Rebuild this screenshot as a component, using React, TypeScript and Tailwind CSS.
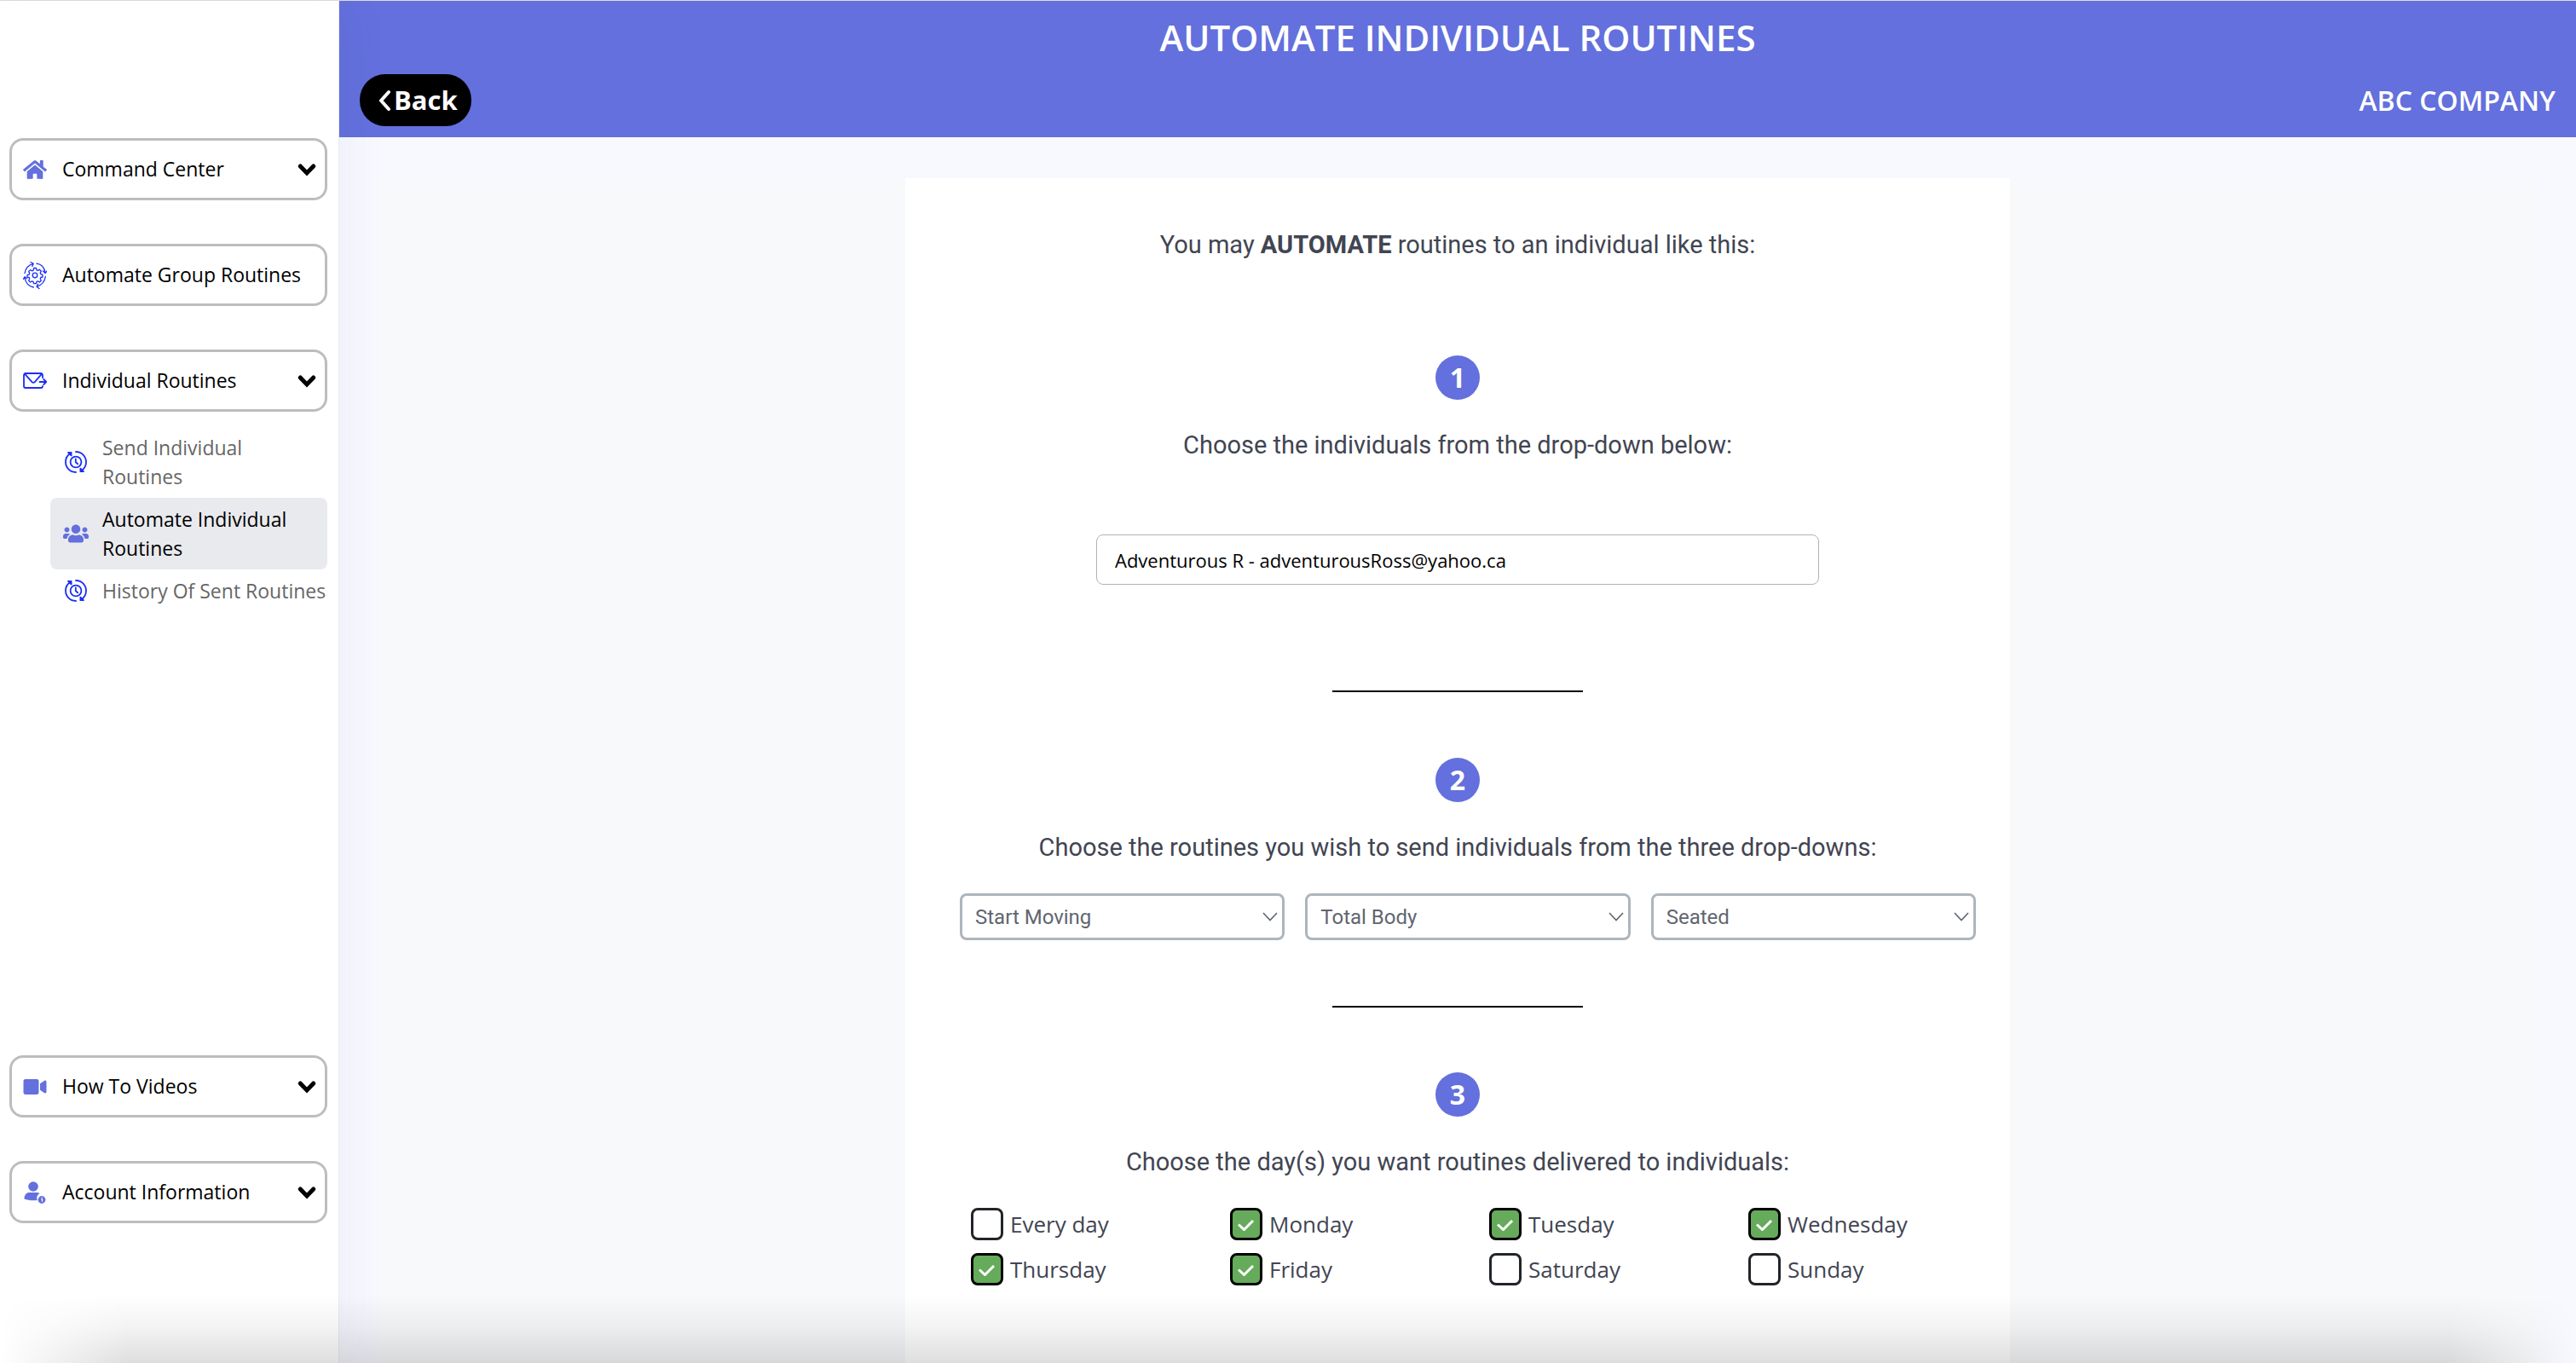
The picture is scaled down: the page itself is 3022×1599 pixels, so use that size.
import { useState } from 'react';
import type { ReactNode } from 'react';
import { FaHome, FaUsers, FaVideo } from 'react-icons/fa';

const GroupCycleIcon = () => (
  <svg viewBox="0 0 28 34" className="w-7 h-[34px]" fill="none" stroke="#1a2ff5" strokeWidth="1.3" strokeLinecap="round" strokeLinejoin="round">
    <circle cx="14" cy="17" r="2.8" />
    <path d="M12.6 8.5h2.8l.5 2.2 1.5.7 2-1.2 2 2-1.2 2 .6 1.5 2.2.5v2.8l-2.2.5-.6 1.5 1.2 2-2 2-2-1.2-1.5.7-.5 2.2h-2.8l-.5-2.2-1.5-.7-2 1.2-2-2 1.2-2-.6-1.5L5 19.4v-2.8l2.2-.5.6-1.5-1.2-2 2-2 2 1.2 1.5-.7z" />
    <path d="M2 14.500C2.800 9.500 6.500 5 12 3.400M9 1.500l3.200 1.800-1.400 3.200" />
    <path d="M16 3.200c5.500.8 9.200 5 10 11M23.500 12l2.600 2.600L28 12" />
    <path d="M26.300 18.500c-.8 5.500-4.500 10-10 11.700M19 32.500l-3-2.200 1.500-3" />
    <path d="M12.300 31C7 30 3 25.500 1.900 19.500M.5 21.500l1.400-2.800 2.600 2" />
  </svg>
);

const MailIcon = () => (
  <svg viewBox="0 0 28 20" className="w-7 h-5" fill="none" stroke="#1a2ff5" strokeWidth="1.8" strokeLinecap="round" strokeLinejoin="round">
    <path d="M23 6V3a2 2 0 0 0-2-2H3a2 2 0 0 0-2 2v13a2 2 0 0 0 2 2h18a2 2 0 0 0 2-2" />
    <path d="M2 1.600l8.500 9.500a2.300 2.300 0 0 0 3.300 0L22 1.600" />
    <path d="M19.500 11H27M24.300 8l3 3-3 3" />
  </svg>
);

const ClockCycleIcon = () => (
  <svg viewBox="0 0 26 26" className="w-[26px] h-[26px]" fill="none" stroke="#1a2ff5" strokeWidth="1.8" strokeLinecap="round" strokeLinejoin="round">
    <circle cx="13" cy="13" r="6.400" />
    <path d="M12.800 9.500v3.800l2.400 2" />
    <path d="M13 25C6 25 1 19.500 1 13c0-4.200 2-8 5.500-10" />
    <path d="M4 1.800h3.600v3.600z" fill="#1a2ff5" />
    <path d="M13 1c7 0 12 5.500 12 12 0 4.200-2 8-5.500 10" />
    <path d="M22 24.200h-3.600v-3.600z" fill="#1a2ff5" />
  </svg>
);

const AccountIcon = () => (
  <svg viewBox="0 0 26 26" className="w-[26px] h-[26px]" fill="#6370dd">
    <circle cx="11" cy="6" r="5.800" />
    <path d="M.5 20.500c0-5 2.500-7.500 6-7.500h9c1.200 0 2.200.3 3 .9-2 1.300-3.300 3.300-3.300 5.600 0 1.100.2 1.700.6 2.600C10 22.800 4 22 .5 20.500z" />
    <circle cx="21" cy="21.500" r="4.400" />
    <path d="M20.200 20.500h1.300v3.300M21.300 18.300v.6" stroke="white" strokeWidth="1.200" fill="none" />
  </svg>
);

const Chevron = () => (
  <svg viewBox="0 0 22 16" className="w-[22px] h-4" fill="none" stroke="black" strokeWidth="5" strokeLinecap="round">
    <path d="M3.300 4l7.700 8 7.700-8" />
  </svg>
);

type MenuButtonProps = {
  icon: ReactNode;
  label: string;
  expandable?: boolean;
};

const MenuButton = ({ icon, label, expandable = true }: MenuButtonProps) => (
  <button
    type="button"
    className="flex items-center w-full h-[73px] pl-[11px] pr-2.5 bg-white border-3 border-[#c0bcbc] rounded-2xl text-[23px] text-black text-left whitespace-nowrap"
  >
    <span className="flex justify-center w-8 mr-4 shrink-0">{icon}</span>
    <span className="flex-1">{label}</span>
    {expandable && <Chevron />}
  </button>
);

const subItems = [
  { label: 'Send Individual Routines', icon: <ClockCycleIcon /> },
  { label: 'Automate Individual Routines', icon: <FaUsers className="w-[30px] h-6 text-[#6370dd]" />, active: true },
  { label: 'History Of Sent Routines', icon: <ClockCycleIcon /> },
];

const Sidebar = () => (
  <aside className="relative z-10 flex flex-col w-[397px] shrink-0 pt-[161px] pb-[164px] pl-[11px] pr-[13px] bg-white shadow-[0_0_60px_rgba(60,70,110,0.07)]">
    <nav className="flex flex-col gap-[51px]">
      <MenuButton icon={<FaHome className="size-7 text-[#6370dd]" />} label="Command Center" />
      <MenuButton icon={<GroupCycleIcon />} label="Automate Group Routines" expandable={false} />
      <div>
        <MenuButton icon={<MailIcon />} label="Individual Routines" />
        <ul className="mt-[17px] ml-12">
          {subItems.map((item) => (
            <li key={item.label}>
              <a
                href="#"
                className={`flex items-center py-2 pl-3.5 pr-px rounded-lg text-[23px] leading-[34px] ${
                  item.active ? 'bg-[#e9eaee] text-black' : 'text-[#666666]'
                }`}
              >
                <span className="flex justify-center w-8 mr-[15px] shrink-0">{item.icon}</span>
                <span>{item.label}</span>
              </a>
            </li>
          ))}
        </ul>
      </div>
    </nav>
    <nav className="flex flex-col gap-[51px] mt-auto">
      <MenuButton icon={<FaVideo className="w-7 h-6 text-[#6370dd]" />} label="How To Videos" />
      <MenuButton icon={<AccountIcon />} label="Account Information" />
    </nav>
  </aside>
);

const StepNumber = ({ value }: { value: number }) => (
  <div className="flex items-center justify-center size-[52px] rounded-full bg-[#6370dd] text-white text-[32px] leading-none font-bold">
    {value}
  </div>
);

const StepText = ({ children }: { children: ReactNode }) => (
  <p className="font-['Roboto',sans-serif] text-[29px] leading-9 text-[#414552] text-center">{children}</p>
);

const Divider = () => <hr className="w-[294px] border-t-2 border-black" />;

const dropdowns = [
  { label: 'Routine type', options: ['Start Moving', 'Keep Moving'] },
  { label: 'Body area', options: ['Total Body', 'Upper Body', 'Lower Body'] },
  { label: 'Position', options: ['Seated', 'Standing'] },
];

const SelectBox = ({ label, options }: { label: string; options: string[] }) => (
  <div className="relative flex-1">
    <select
      aria-label={label}
      className="appearance-none block w-full h-[55px] px-[15px] bg-white border-3 border-[#adb5bd] rounded-lg font-['Roboto',sans-serif] text-2xl text-[#5f6670]"
    >
      {options.map((option) => (
        <option key={option}>{option}</option>
      ))}
    </select>
    <svg viewBox="0 0 18 11" className="absolute right-2 top-[22px] w-[18px] h-[11px] pointer-events-none" fill="none" stroke="#5f6670" strokeWidth="1.600">
      <path d="M1 1l8 8.500L17 1" />
    </svg>
  </div>
);

const days = ['Every day', 'Monday', 'Tuesday', 'Wednesday', 'Thursday', 'Friday', 'Saturday', 'Sunday'];

const DayOption = ({ day, checked, onToggle }: { day: string; checked: boolean; onToggle: () => void }) => (
  <label className="flex items-center gap-2 text-[26px] leading-[38px] text-[#414552]">
    <span className="grid place-items-center size-[38px]">
      <input
        type="checkbox"
        checked={checked}
        onChange={onToggle}
        className="appearance-none col-start-1 row-start-1 size-[38px] bg-white border-3 border-[#212529] rounded-lg checked:bg-[#66ab5b] checked:border-black"
      />
      {checked && (
        <svg viewBox="0 0 20 16" className="col-start-1 row-start-1 w-5 h-4 pointer-events-none" fill="none" stroke="white" strokeWidth="3">
          <path d="M1 8.500l6.500 6L18 4" />
        </svg>
      )}
    </span>
    {day}
  </label>
);

const App = () => {
  const [person, setPerson] = useState('Adventurous R - adventurousRoss@yahoo.ca');
  const [selected, setSelected] = useState(['Monday', 'Tuesday', 'Wednesday', 'Thursday', 'Friday']);

  const toggleDay = (day: string) => {
    setSelected((prev) => (prev.includes(day) ? prev.filter((d) => d !== day) : [...prev, day]));
  };

  return (
    <div className="relative flex min-h-screen border-t border-[#dcdfe0] bg-[#f8f9ff] font-['Open_Sans','Noto_Sans',sans-serif]">
      <Sidebar />

      <div className="flex flex-col flex-1 border-l border-[#eeeff3]">
        <header className="h-40 px-6 bg-[#6370dd] text-white">
          <h1 className="pt-3.5 text-[42px] leading-[58px] font-semibold text-center">AUTOMATE INDIVIDUAL ROUTINES</h1>
          <div className="flex items-center justify-between mt-3.5">
            <button type="button" className="flex items-center gap-1 h-[61px] pl-[22px] pr-4 rounded-[30px] bg-black text-[31px] font-bold">
              <svg viewBox="0 0 14 26" className="w-3.5 h-[26px]" fill="none" stroke="white" strokeWidth="4" strokeLinecap="round" strokeLinejoin="round">
                <path d="M12 3L3 13l9 10" />
              </svg>
              Back
            </button>
            <span className="text-[32px] font-semibold">ABC COMPANY</span>
          </div>
        </header>

        <main className="flex flex-1 pt-12 px-12">
          <div className="flex flex-1 justify-center bg-[#f7f9fb]">
            <section className="flex flex-col items-center w-[1296px] max-w-full bg-white pt-[60px]">
              <StepText>
                You may <strong className="font-bold">AUTOMATE</strong> routines to an individual like this:
              </StepText>

              <div className="flex flex-col items-center w-full mt-28">
                <StepNumber value={1} />
                <div className="mt-[35px]">
                  <StepText>Choose the individuals from the drop-down below:</StepText>
                </div>
                <input
                  type="text"
                  aria-label="Individual"
                  value={person}
                  onChange={(e) => setPerson(e.target.value)}
                  className="w-[848px] h-[59px] mt-[87px] px-[21px] bg-white border border-[#adb3bd] rounded-lg text-[22px] text-black"
                />
              </div>

              <div className="mt-[124px]">
                <Divider />
              </div>

              <div className="flex flex-col items-center w-full mt-[77px] pl-16 pr-10">
                <div className="flex flex-col items-center pr-6">
                  <StepNumber value={2} />
                  <div className="mt-[35px]">
                    <StepText>Choose the routines you wish to send individuals from the three drop-downs:</StepText>
                  </div>
                </div>
                <div className="flex w-full gap-6 mt-9">
                  {dropdowns.map((dropdown) => (
                    <SelectBox key={dropdown.label} {...dropdown} />
                  ))}
                </div>
              </div>

              <div className="mt-[77px]">
                <Divider />
              </div>

              <div className="flex flex-col items-center w-full mt-[76px] pb-16">
                <StepNumber value={3} />
                <div className="mt-[35px]">
                  <StepText>Choose the day(s) you want routines delivered to individuals:</StepText>
                </div>
                <div className="grid grid-cols-4 gap-y-[15px] w-full mt-9 pl-[77px] pr-[3px]">
                  {days.map((day) => (
                    <DayOption key={day} day={day} checked={selected.includes(day)} onToggle={() => toggleDay(day)} />
                  ))}
                </div>
              </div>
            </section>
          </div>
        </main>
      </div>

      {/* shade along the bottom edge */}
      <div className="absolute bottom-0 inset-x-0 z-20 h-20 pointer-events-none bg-linear-to-t from-black/13 via-black/5 to-transparent mask-x-from-95% mask-x-to-100%" />
    </div>
  );
};

export default App;
